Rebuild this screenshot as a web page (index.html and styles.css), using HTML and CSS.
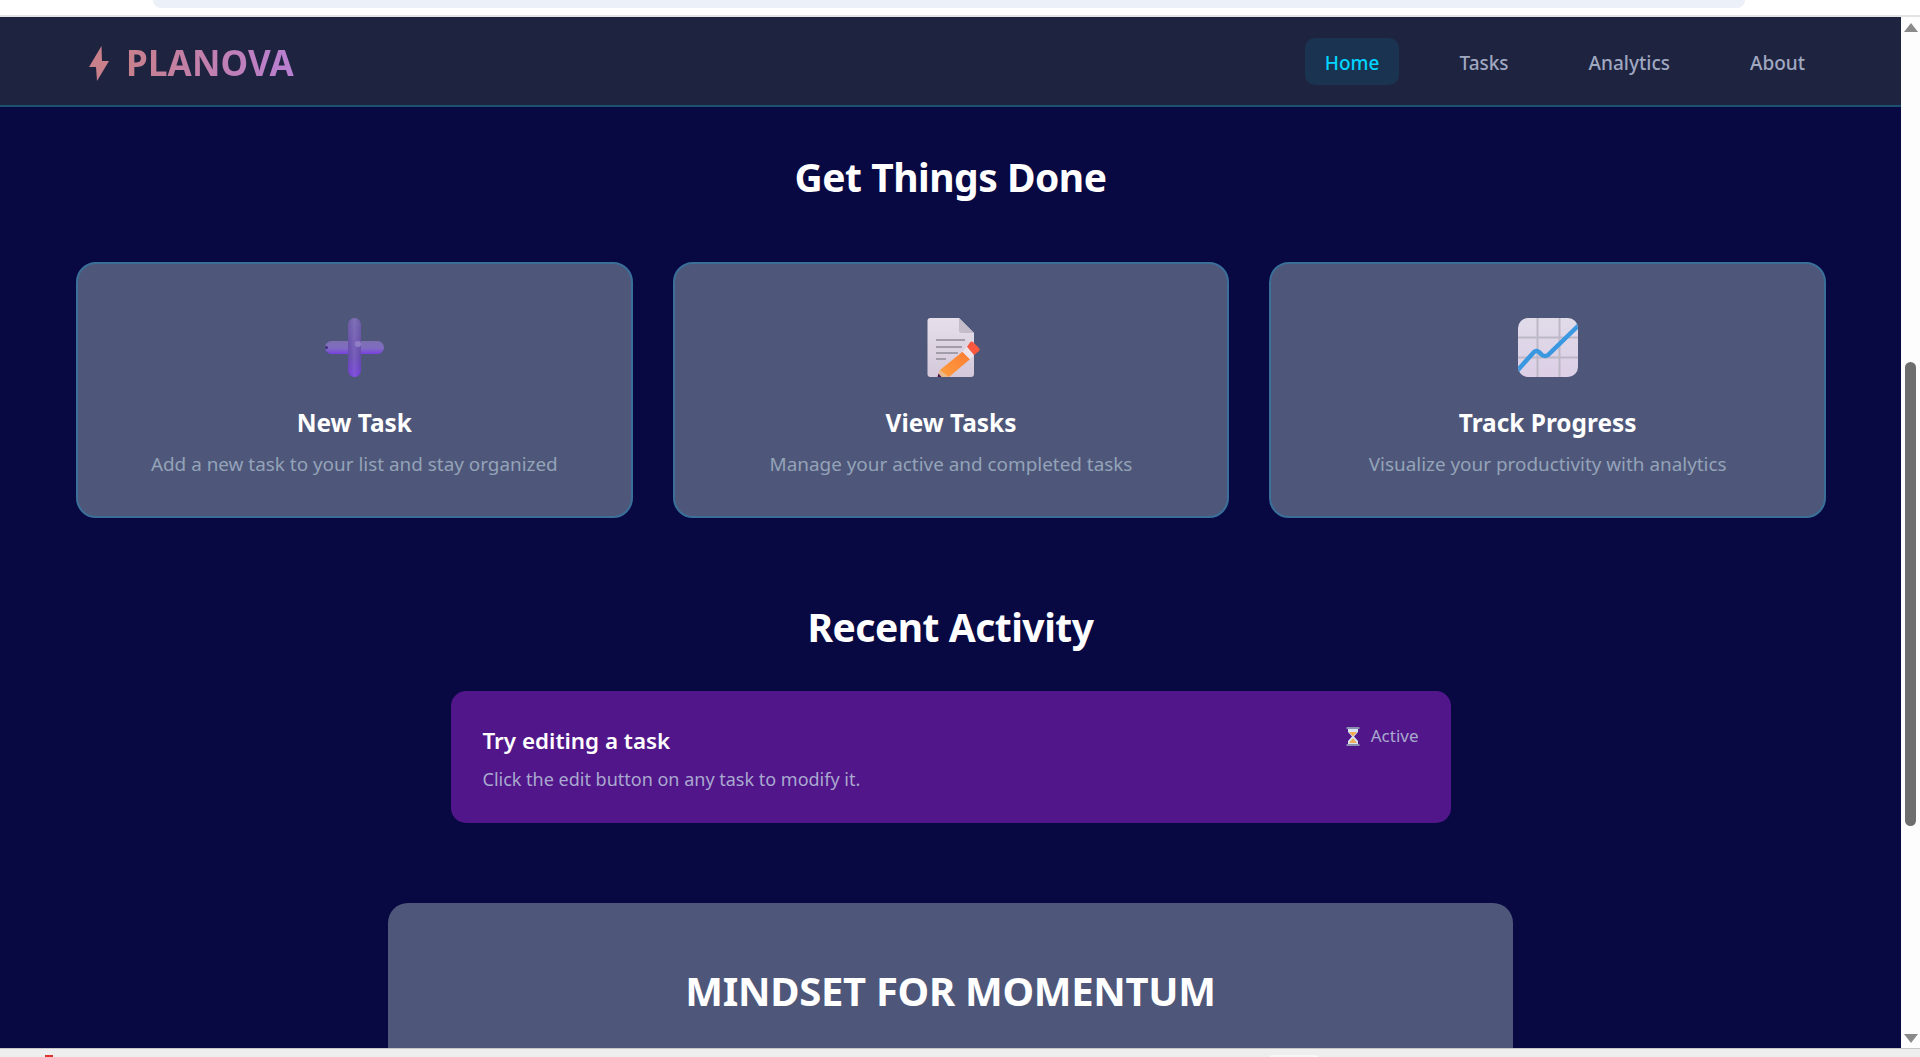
FILE: index.html
```html
<!DOCTYPE html>
<html lang="en">
  <head>
    <meta charset="UTF-8" />
    <title>Planova</title>
    <meta name="viewport" content="width=device-width, initial-scale=1.0" />
    <link rel="stylesheet" href="styles.css">
  </head>
  <body>
    <div class="browser-top"><div class="address-bar"></div></div>

    <div class="window">
      <div class="page">
        <header class="navbar">
          <div class="logo">
            <svg class="bolt" width="21" height="35" viewBox="0 0 21 35">
              <path d="M12.5 0 L0 21 L7 21 L8 35 L20 15 L13 15 Z" fill="#c9808a" />
            </svg>
            <span class="logo-text">PLANOVA</span>
          </div>
          <nav class="nav-links">
            <a class="nav-link active">Home</a>
            <a class="nav-link">Tasks</a>
            <a class="nav-link">Analytics</a>
            <a class="nav-link">About</a>
          </nav>
        </header>

        <main class="content">
          <h2 class="section-title">Get Things Done</h2>

          <section class="cards">
            <div class="card">
              <svg class="card-icon" width="59" height="59" viewBox="0 0 59 59">
                <defs>
                  <linearGradient id="plusV" x1="0" y1="0" x2="0" y2="1">
                    <stop offset="0" stop-color="#7767ae" />
                    <stop offset="0.65" stop-color="#6c50b4" />
                    <stop offset="1" stop-color="#7c3fe4" />
                  </linearGradient>
                  <linearGradient id="plusH" x1="0" y1="0" x2="0" y2="1">
                    <stop offset="0" stop-color="#7e6fb2" />
                    <stop offset="0.55" stop-color="#7f6cc0" />
                    <stop offset="1" stop-color="#7a40e0" />
                  </linearGradient>
                  <linearGradient id="plusShade" x1="0" y1="0" x2="1" y2="0">
                    <stop offset="0" stop-color="#4a3a8c" stop-opacity="0.2" />
                    <stop offset="0.5" stop-color="#9a8ccc" stop-opacity="0.25" />
                    <stop offset="1" stop-color="#4a3a8c" stop-opacity="0.2" />
                  </linearGradient>
                </defs>
                <rect x="0" y="23" width="59" height="13" rx="6.5" fill="url(#plusH)" />
                <rect x="23" y="0" width="13" height="59" rx="6.5" fill="url(#plusV)" />
                <rect x="23" y="0" width="13" height="59" rx="6.5" fill="url(#plusShade)" />
                <circle cx="33" cy="26" r="3" fill="#8f7fc6" />
                <circle cx="1.5" cy="29.5" r="1.5" fill="#3f2f78" />
              </svg>
              <h3 class="card-title">New Task</h3>
              <p class="card-text">Add a new task to your list and stay organized</p>
            </div>

            <div class="card">
              <svg class="card-icon" width="59" height="59" viewBox="0 0 59 59">
                <defs>
                  <linearGradient id="paper" x1="0" y1="0" x2="0" y2="1">
                    <stop offset="0" stop-color="#e6dfea" />
                    <stop offset="1" stop-color="#d4c8da" />
                  </linearGradient>
                  <linearGradient id="pencil" x1="0" y1="1" x2="1" y2="0">
                    <stop offset="0" stop-color="#ffa040" />
                    <stop offset="1" stop-color="#fb7c34" />
                  </linearGradient>
                </defs>
                <path d="M9.5 0 H38 L53 15 V56 Q53 59 50 59 H9.5 Q6.5 59 6.5 56 V3 Q6.5 0 9.5 0 Z" fill="url(#paper)" />
                <path d="M38 0 L53 15 H41 Q38 15 38 12 Z" fill="#c4bcc8" />
                <rect x="15" y="21" width="29" height="2" fill="#a29da8" />
                <rect x="15" y="28" width="26" height="2" fill="#a29da8" />
                <rect x="15" y="34" width="22" height="2" fill="#a29da8" />
                <rect x="15" y="40" width="10" height="2" fill="#a29da8" />
                <path d="M19 52 L41.5 33.7 L49 41.3 L28 59 H17 Z" fill="url(#pencil)" />
                <path d="M19 52 L16.5 59 H28 Z" fill="#e9b98c" />
                <path d="M17.5 55.5 L16.5 59 H20.5 Z" fill="#4b1550" />
                <path d="M41.5 33.7 L46 28.7 L53 37 L49 41.3 Z" fill="#ece4ea" />
                <path d="M46 28.7 L49 24.5 Q50.5 22.5 52.5 24.5 L58 30 Q59.5 32 57.5 33.5 L53 37 Z" fill="#f9573e" />
              </svg>
              <h3 class="card-title">View Tasks</h3>
              <p class="card-text">Manage your active and completed tasks</p>
            </div>

            <div class="card">
              <svg class="card-icon" width="60" height="59" viewBox="0 0 60 59">
                <defs>
                  <linearGradient id="grid" x1="0" y1="0" x2="0" y2="1">
                    <stop offset="0" stop-color="#e0dbe9" />
                    <stop offset="1" stop-color="#dccfe6" />
                  </linearGradient>
                  <clipPath id="gridClip">
                    <rect width="60" height="59" rx="10" />
                  </clipPath>
                </defs>
                <g clip-path="url(#gridClip)">
                  <rect width="60" height="59" fill="url(#grid)" />
                  <path d="M19.5 0 V59 M41.5 0 V59 M0 19.5 H60 M0 39.5 H60" stroke="#bdb8c6" stroke-width="2" fill="none" />
                  <path d="M-1 53 L16 34 Q18 32 21 34 L24 37 Q27 39 30 37 L61 7" stroke="#3a98e0" stroke-width="4.5" fill="none" />
                </g>
              </svg>
              <h3 class="card-title">Track Progress</h3>
              <p class="card-text">Visualize your productivity with analytics</p>
            </div>
          </section>

          <h2 class="section-title recent-title">Recent Activity</h2>

          <section class="activity">
            <div class="activity-body">
              <h4 class="activity-title">Try editing a task</h4>
              <p class="activity-text">Click the edit button on any task to modify it.</p>
            </div>
            <div class="status">
              <svg width="14" height="19" viewBox="0 0 14 19">
                <path d="M2 2 H12 V5 L8 9.5 L12 14 V17 H2 V14 L6 9.5 L2 5 Z" fill="#d8e6f4" />
                <path d="M3 5 H11 L7 9.5 Z" fill="#f2ac55" />
                <path d="M3 16 L7 11 L11 16 Z" fill="#f2ac55" />
                <rect x="0.5" y="0" width="13" height="2" fill="#8a8fb0" />
                <rect x="0.5" y="17" width="13" height="2" fill="#8a8fb0" />
              </svg>
              <span>Active</span>
            </div>
          </section>

          <section class="mindset">
            <h2 class="mindset-title">MINDSET FOR MOMENTUM</h2>
          </section>
        </main>
      </div>

      <div class="scrollbar">
        <span class="arrow-up"></span>
        <div class="scroll-track"><div class="scroll-thumb"></div></div>
        <span class="arrow-down"></span>
      </div>
    </div>

    <div class="browser-bottom">
      <span class="tray-icon"></span>
      <span class="tray-tab"></span>
    </div>
  </body>
</html>
```

FILE: styles.css
```css
* {
  box-sizing: border-box;
}

html,
body {
  height: 100%;
}

body {
  margin: 0;
  display: flex;
  flex-direction: column;
  height: 1057px;
  overflow: hidden;
  font-family: "Noto Sans", "Open Sans", sans-serif;
  background-color: #ffffff;
}

/* browser chrome */
.browser-top {
  height: 17px;
  flex: none;
  background-color: #ffffff;
  border-bottom: 2px solid #e3e3e3;
}

.address-bar {
  height: 8px;
  margin: 0 175px 0 153px;
  background-color: #ebf0f9;
  border-radius: 0 0 18px 18px;
}

.browser-bottom {
  height: 9px;
  flex: none;
  display: flex;
  background-color: #eeeeee;
  border-top: 1px solid #c6c6c6;
}

.tray-icon {
  width: 8px;
  height: 2px;
  margin: 6px 0 0 45px;
  background-color: #d9352a;
}

.tray-tab {
  width: 48px;
  height: 2px;
  margin: 6px 0 0 1217px;
  background-color: #f8f8f8;
  border-radius: 4px 4px 0 0;
}

.window {
  flex: 1;
  display: flex;
  min-height: 0;
}

.page {
  flex: 1;
  min-width: 0;
  overflow: hidden;
  background-color: #080843;
}

/* scrollbar */
.scrollbar {
  width: 19px;
  flex: none;
  display: flex;
  flex-direction: column;
  align-items: center;
  padding: 6px 0 5px;
  background-color: #fdfdfd;
}

.arrow-up,
.arrow-down {
  width: 0;
  height: 0;
  border-left: 7px solid transparent;
  border-right: 7px solid transparent;
}

.arrow-up {
  border-bottom: 9px solid #8a8a8a;
}

.arrow-down {
  border-top: 9px solid #8a8a8a;
}

.scroll-track {
  flex: 1;
  width: 100%;
  padding: 330px 0 0 4px;
}

.scroll-thumb {
  width: 11px;
  height: 464px;
  background-color: #6e6e6e;
  border-radius: 6px;
}

/* navbar */
.navbar {
  height: 90px;
  display: flex;
  align-items: center;
  justify-content: space-between;
  padding: 0 76px 0 89px;
  background-color: #1e2340;
  border-bottom: 2px solid #1c5070;
}

.logo {
  display: flex;
  align-items: center;
  gap: 16px;
  padding-top: 4px;
}

.logo-text {
  font-size: 35px;
  font-weight: 700;
  line-height: 44px;
  letter-spacing: 0.15px;
  background: linear-gradient(90deg, #c8808c, #b97fd2);
  -webkit-background-clip: text;
  background-clip: text;
  color: transparent;
}

.nav-links {
  display: flex;
  gap: 40px;
}

.nav-link {
  padding: 12px 20px 8px;
  font-size: 19px;
  font-weight: 500;
  line-height: 27px;
  color: #a0a8c0;
  border-radius: 10px;
}

.nav-link.active {
  color: #00d4ff;
  background-color: #1a3350;
}

/* main */
.content {
  padding: 46px 76px 0;
}

.section-title {
  margin: 0;
  font-size: 39px;
  font-weight: 700;
  line-height: 48px;
  letter-spacing: -0.5px;
  text-align: center;
  color: #ffffff;
}

.cards {
  display: grid;
  grid-template-columns: repeat(3, 1fr);
  gap: 40px;
  margin: 61px -1px 0 0;
}

.card {
  height: 256px;
  padding-top: 54px;
  text-align: center;
  background-color: #4e577a;
  border: 2px solid #3a6f9a;
  border-radius: 20px;
}

.card-icon {
  display: block;
  margin: 0 auto;
  overflow: visible;
}

.card-title {
  margin: 31px 0 0;
  font-size: 24.4px;
  font-weight: 700;
  line-height: 30px;
  color: #ffffff;
}

.card-text {
  margin: 13px 0 0;
  font-size: 18.9px;
  line-height: 26px;
  color: #94a3b8;
}

.recent-title {
  margin-top: 85px;
}

.activity {
  display: flex;
  justify-content: space-between;
  align-items: flex-start;
  width: 1000px;
  height: 132px;
  margin: 40px auto 0;
  padding: 33px 32px 0;
  background-color: #51168a;
  border-radius: 15px;
}

.activity-title {
  margin: 2px 0 0;
  font-size: 22.4px;
  font-weight: 600;
  line-height: 30px;
  color: #ffffff;
}

.activity-text {
  margin: 10px 0 0;
  font-size: 18px;
  line-height: 26px;
  color: #a9a9cf;
}

.status {
  display: flex;
  align-items: center;
  gap: 11px;
  font-size: 17px;
  line-height: 24px;
  color: #a9a9cf;
}

.mindset {
  width: 1125px;
  height: 300px;
  margin: 80px auto 0;
  padding-top: 64px;
  background-color: #4e577a;
  border-radius: 20px;
}

.mindset-title {
  margin: 0;
  font-size: 40px;
  font-weight: 700;
  line-height: 48px;
  letter-spacing: -0.3px;
  text-align: center;
  color: #ffffff;
}
```
